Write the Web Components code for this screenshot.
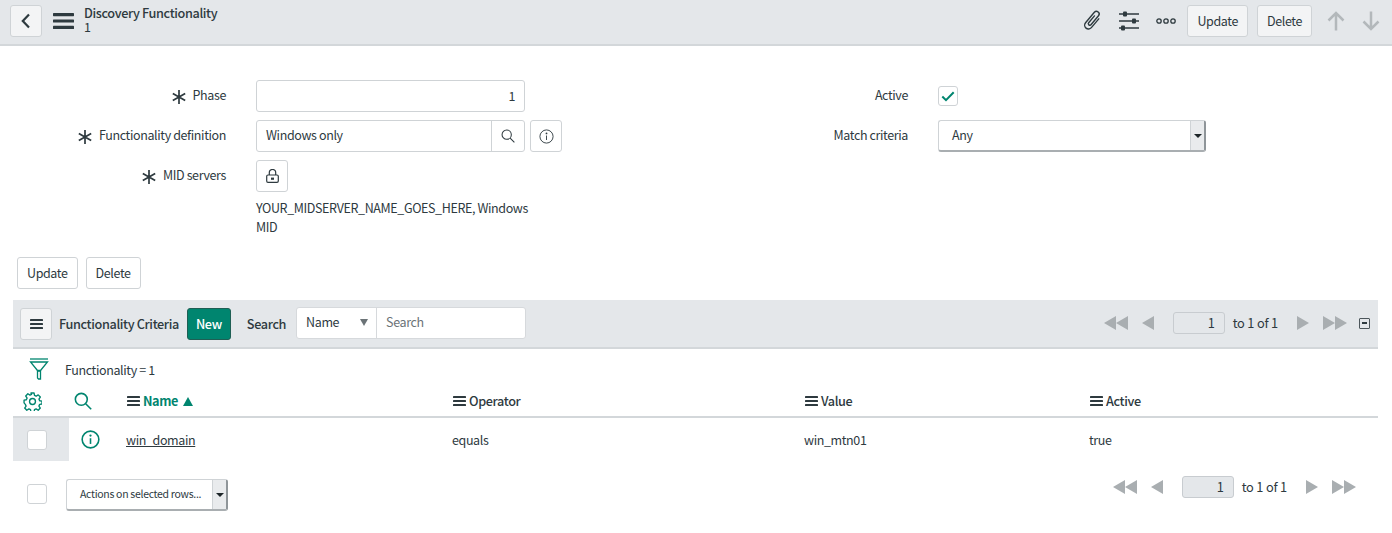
<!DOCTYPE html>
<html><head><meta charset="utf-8"><title>Discovery Functionality</title>
<style>
html,body{margin:0;padding:0;background:#fff}
body{font-family:"Noto Sans CJK JP","Noto Sans",sans-serif;font-size:12.500px;letter-spacing:-.38px;color:#2e3a3f;line-height:20px;width:1392px;height:533px;overflow:hidden}
</style></head><body>
<app-page></app-page>
<script>
const F='12.500px', FB='12.700px';
const ICON={
 back:'<svg width="12" height="16" viewBox="0 0 12 16"><path d="M9 1.5 2.800 8 9 14.500" fill="none" stroke="#2e3a3f" stroke-width="2.200"/></svg>',
 burger:(w,h,sw)=>`<svg width="${w}" height="${h}" viewBox="0 0 ${w} ${h}"><g fill="#2e3a3f"><rect y="0" width="${w}" height="${sw}" rx=".6"/><rect y="${(h-sw)/2}" width="${w}" height="${sw}" rx=".6"/><rect y="${h-sw}" width="${w}" height="${sw}" rx=".6"/></g></svg>`,
 clip:'<svg width="24" height="24" viewBox="0 0 24 24"><path transform="rotate(40 12 12)" d="M15.800 6V17.500a3.800 3.800 0 0 1-7.600 0V3.800a2.700 2.700 0 0 1 5.400 0V15.500a1.500 1.500 0 0 1-3 0V6.500" fill="none" stroke="#2e3a3f" stroke-width="1.400" stroke-linecap="round"/></svg>',
 sliders:'<svg width="20" height="20" viewBox="0 0 20 20"><g stroke="#2e3a3f" stroke-width="1.600"><path d="M0 3h20M0 10h20M0 17h20"/></g><g fill="#2e3a3f"><rect x="4" y="0.500" width="4" height="5" rx="1"/><rect x="13" y="7.500" width="4" height="5" rx="1"/><rect x="2" y="14.500" width="4" height="5" rx="1"/></g></svg>',
 dots:'<svg width="20" height="6" viewBox="0 0 20 6"><g fill="none" stroke="#2e3a3f" stroke-width="1.300"><circle cx="3" cy="3" r="2.200"/><circle cx="10" cy="3" r="2.200"/><circle cx="17" cy="3" r="2.200"/></g></svg>',
 up:'<svg width="18" height="20" viewBox="0 0 18 20"><path d="M9 19.500V2M1.500 9.500 9 2l7.500 7.500" fill="none" stroke="#b3b8bb" stroke-width="2.500"/></svg>',
 down:'<svg width="18" height="20" viewBox="0 0 18 20"><path d="M9 .5V18M1.500 10.500 9 18l7.500-7.500" fill="none" stroke="#b3b8bb" stroke-width="2.500"/></svg>',
 star:'<svg width="14" height="14" viewBox="0 0 14 14" style="position:relative;top:.5px"><path d="M7 0v14M.8 3.400 13.200 10.600M13.200 3.400.8 10.600" stroke="#2e3a3f" stroke-width="1.700" fill="none"/></svg>',
 search:(s,c,sw)=>`<svg width="${s}" height="${s}" viewBox="0 0 16 16"><circle cx="6.500" cy="6.500" r="5.300" fill="none" stroke="${c}" stroke-width="${sw}"/><path d="M10.400 10.400 15.300 15.300" stroke="${c}" stroke-width="${sw}"/></svg>`,
 info:(s,c,sw)=>`<svg width="${s}" height="${s}" viewBox="0 0 18 18"><circle cx="9" cy="9" r="7.900" fill="none" stroke="${c}" stroke-width="${sw}"/><circle cx="9" cy="5.300" r="1.100" fill="${c}"/><path d="M9 7.800v5.400" stroke="${c}" stroke-width="${sw}"/></svg>`,
 lock:'<svg width="13" height="14" viewBox="0 0 13 14"><rect x=".7" y="6" width="11.600" height="7.300" rx="1.300" fill="none" stroke="#2e3a3f" stroke-width="1.200"/><path d="M3.300 6V3.700a3.200 3.200 0 0 1 6.400 0V6" fill="none" stroke="#2e3a3f" stroke-width="1.200"/><rect x="5" y="8.600" width="3" height="2.200" fill="#2e3a3f"/></svg>',
 check:'<svg width="14" height="11" viewBox="0 0 14 11"><path d="M1.300 5.500 5 9.200 12.700 1.300" fill="none" stroke="#00856f" stroke-width="2"/></svg>',
 funnel:'<svg width="20" height="22" viewBox="0 0 20 22"><g fill="none" stroke="#00856f" stroke-width="1.300"><path d="M1 1h18"/><path d="M1.500 4h17L11.500 12.500h-3z"/><path d="M8.500 13h3v8h-2l-1-1z"/></g></svg>',
 gear:'<svg width="19" height="19" viewBox="0 0 18 18"><g fill="none" stroke="#00856f" stroke-width="1.300"><circle cx="9" cy="9" r="2.800"/><path d="M7.500 1h3l.4 2.300 1.500.7 2-1.300 2 2.100-1.300 1.900.7 1.600 2.200.4v2.600l-2.200.4-.7 1.600 1.300 1.900-2 2.100-2-1.300-1.500.7-.4 2.300h-3l-.4-2.300-1.500-.7-2 1.300-2-2.100 1.300-1.900-.7-1.600L1 10.300V7.700l2.200-.4.7-1.600-1.300-1.900 2-2.100 2 1.300 1.500-.7z" stroke-linejoin="round"/></g></svg>'
};
function def(name,css,html){
 customElements.define(name,class extends HTMLElement{
  constructor(){super();const r=this.attachShadow({mode:'open'});
   const g=a=>this.getAttribute(a);
   r.innerHTML='<style>'+css+'</style>'+(typeof html==='function'?html(g):html);}
 });
}
const BTN=`box-sizing:border-box;border:1px solid #cfd3d6;border-radius:3px;background:#f3f4f5;`;
def('sn-btn',`:host{display:inline-flex;align-items:center;justify-content:center;${BTN}height:32px;padding:0 9px 1px;color:#2e3a3f;font-size:${F};line-height:20px;white-space:nowrap}
:host([plain]){background:#fff}
:host([primary]){background:#00856f;border-color:#1f5f54;color:#fff;font-weight:500;font-size:${FB}}`,'<slot></slot>');

def('sn-header',`:host{display:flex;align-items:center;box-sizing:border-box;height:46px;background:#e4e7ea;border-bottom:2px solid #d3d7da;padding:0 12px 2px 10px}
.t{margin-left:10px;margin-top:-4px}
.t b{display:block;font-weight:500;font-size:${FB};line-height:15px}
.t span{display:block;font-size:${F};line-height:14px}
.burger{margin-left:11px;display:flex}
.sp{flex:1}
.icons{display:flex;align-items:center}
.i{display:flex}`,
`<sn-btn style="width:32px;padding:0">${ICON.back}</sn-btn>
<span class="burger">${ICON.burger(21,16,3.2)}</span>
<div class="t"><b>Discovery Functionality</b><span>1</span></div><div class="sp"></div>
<div class="icons"><span class="i">${ICON.clip}</span><span class="i" style="margin-left:15px">${ICON.sliders}</span><span class="i" style="margin-left:17px">${ICON.dots}</span>
<sn-btn style="margin-left:11px">Update</sn-btn><sn-btn style="margin-left:9px">Delete</sn-btn>
<span class="i" style="margin-left:15px">${ICON.up}</span><span class="i" style="margin-left:17px">${ICON.down}</span></div>`);

def('sn-label',`:host{display:flex;align-items:center;justify-content:flex-end;gap:7px;font-size:${F};height:32px;white-space:nowrap}
.s{display:flex}
.x{position:relative;top:-1px}`,g=>`${g('req')!==null?`<span class="s">${ICON.star}</span>`:''}<span class="x"><slot></slot></span>`);

const INPUT=`box-sizing:border-box;border:1px solid #cfd3d6;border-radius:3px;background:#fff;height:32px;`;
def('sn-input',`:host{display:flex;align-items:center;${INPUT}width:269px;padding:0 9px 1px;font-size:${F}}
:host([right]){justify-content:flex-end}`,'<slot></slot>');

def('sn-ref',`:host{display:flex;gap:5px}
.f{display:flex;${INPUT}width:269px}
.v{flex:1;padding:0 9px 2px;display:flex;align-items:center;font-size:${F}}
.b{width:32px;border-left:1px solid #cfd3d6;display:flex;align-items:center;justify-content:center}
.i{${INPUT}width:32px;display:flex;align-items:center;justify-content:center}`,
`<div class="f"><div class="v"><slot></slot></div><div class="b">${ICON.search(14,'#2e3a3f',1.200)}</div></div><div class="i">${ICON.info(15,'#2e3a3f',1.100)}</div>`);

def('sn-select',`:host{display:flex;box-sizing:border-box;height:32px;border:1px solid #cfd3d6;border-right:2px solid #8f9599;border-bottom:2px solid #a9aeb1;border-radius:3px;background:#fff;font-size:${F};white-space:nowrap}
.v{flex:1;display:flex;align-items:center}
.c{width:13px;background:#e9ebed;border-left:1px solid #cfd3d6;display:flex;align-items:center;justify-content:center}
.c i{width:0;height:0;border:4px solid transparent;border-top:4px solid #1d2528;border-bottom:0}`,
`<div class="v"><slot></slot></div><div class="c"><i></i></div>`);

def('sn-check',`:host{display:flex;align-items:center;justify-content:center;box-sizing:border-box;width:20px;height:20px;border:1px solid #cfd3d6;border-radius:3px;background:#fff}`,
g=>g('checked')!==null?ICON.check:'');

def('sn-form',`:host{display:block;padding-top:34px}
.lock{${INPUT}width:32px;display:flex;align-items:center;justify-content:center}
.acts{display:flex;gap:8px;padding:21px 0 0 17px}
.wrap{display:grid;grid-template-columns:226px 300px 382px 298px}
.c{display:flex;flex-direction:column;gap:8px}
.c2{padding-left:30px;box-sizing:border-box}`,
`<div class="wrap">
 <div class="c"><sn-label req>Phase</sn-label><sn-label req>Functionality definition</sn-label><sn-label req>MID servers</sn-label></div>
 <div class="c c2"><sn-input right>1</sn-input><sn-ref style="width:306px">Windows only</sn-ref><div class="lock">${ICON.lock}</div>
   <div style="margin-top:-2px;width:274px;line-height:19px">YOUR_MIDSERVER_NAME_GOES_HERE, Windows MID</div></div>
 <div class="c"><sn-label>Active</sn-label><sn-label>Match criteria</sn-label></div>
 <div class="c c2"><div style="height:32px;display:flex;align-items:center"><sn-check checked></sn-check></div><sn-select style="width:268px"><span style="padding:0 0 2px 13px">Any</span></sn-select></div>
</div>
<div class="acts"><sn-btn plain>Update</sn-btn><sn-btn plain>Delete</sn-btn></div>`);

const tri=(d,c='#a9aeb1')=>`<i style="display:block;width:0;height:0;border-style:solid;border-width:7px 0 7px 0;border-color:transparent;${d=='l'?`border-right:12px solid ${c}`:`border-left:12px solid ${c}`}"></i>`;
def('sn-pager',`:host{display:flex;align-items:center;font-size:12.800px;letter-spacing:-.2px;white-space:nowrap}
.p{display:flex}
.n{${BTN}width:52px;height:22px;background:#e4e7ea;border-color:#c8ccd0;text-align:right;padding-right:9px;line-height:20px;margin:0 8px 0 19px}
.z{margin-left:19px}`,
`<span class="p">${tri('l')}${tri('l')}</span><span class="p" style="margin-left:14px">${tri('l')}</span><div class="n">1</div><span>to 1 of 1</span>
<span class="p z">${tri('r')}</span><span class="p" style="margin-left:14px">${tri('r')}${tri('r')}</span><slot></slot>`);

def('sn-listbar',`:host{display:flex;align-items:center;box-sizing:border-box;height:49px;background:#e4e7ea;border-bottom:2px solid #d3d7da;padding:1px 8px 0 7px;font-size:${F}}
.title{font-weight:500;margin-left:7px;font-size:${FB};white-space:nowrap}
.sl{font-weight:500;margin-left:16px;font-size:${FB}}
.srch{display:flex;${INPUT}width:230px;margin:0 0 2px 10px;border-color:#d6d9dc}
.n{width:80px;border-right:1px solid #d6d9dc;display:flex;align-items:center;justify-content:space-between;box-sizing:border-box;padding:0 8px 2px 9px}
.n i{width:0;height:0;border:4.500px solid transparent;border-top:7px solid #6b7377;border-bottom:0}
.q{padding:0 0 2px 9px;color:#6b7377;display:flex;align-items:center}
.sp{flex:1}
.min{box-sizing:border-box;width:11px;height:11px;border:1px solid #4c565b;margin-left:12px;display:flex;align-items:center;justify-content:center;border-radius:1px}
.min b{display:block;width:5px;height:1.500px;background:#2e3a3f}`,
`<sn-btn style="width:32px;padding:0">${ICON.burger(13,10,2)}</sn-btn><span class="title">Functionality Criteria</span>
<sn-btn primary style="margin-left:8px;width:44px;padding:0 0 1px">New</sn-btn><span class="sl">Search</span>
<div class="srch"><div class="n"><span>Name</span><i></i></div><div class="q">Search</div></div><div class="sp"></div>
<sn-pager style="margin-bottom:2px"><div class="min"><b></b></div></sn-pager>`);

def('sn-table',`:host{display:block;font-size:${F}}
.filter{display:flex;align-items:center;height:40px;box-sizing:border-box;padding:0 0 0 16px}
.ftxt{margin-left:16px;position:relative;top:1px}
table{border-collapse:separate;border-spacing:0;width:1365px;table-layout:fixed}
th,td{padding:0;text-align:left;vertical-align:middle;font-weight:500}
th{height:29px;box-sizing:border-box;border-bottom:2px solid #d3d7da;white-space:nowrap;padding-bottom:3px;font-size:${FB}}
th>div{display:flex;align-items:center;gap:3px;padding-left:1px}
td{height:43px;font-weight:400}
.ch{background:#e4e7ea}
.ch sn-check{margin-left:14px}
.g{color:#00856f;font-weight:700}
.up{width:0;height:0;border:5px solid transparent;border-bottom:9px solid #00856f;border-top:0;margin-left:2px}
a{color:#2e3a3f;text-decoration:underline}
.ic{display:flex}
.foot{display:flex;align-items:flex-start;padding:0 22px 0 14px;margin-top:15px}
.sp{flex:1}`,
`<div class="filter"><span class="ic">${ICON.funnel}</span><span class="ftxt">Functionality = 1</span></div>
<table><colgroup><col style="width:56px"><col style="width:57px"><col style="width:326px"><col style="width:352px"><col style="width:285px"><col></colgroup>
<tr><th><div style="padding-left:10px">${ICON.gear}</div></th><th><div style="padding-left:5px">${ICON.search(18,'#00856f',1.400)}</div></th>
<th><div>${ICON.burger(13,10,2)}<span class="g">Name</span><span class="up"></span></div></th>
<th><div>${ICON.burger(13,10,2)}<span>Operator</span></div></th><th><div>${ICON.burger(13,10,2)}<span>Value</span></div></th><th><div>${ICON.burger(13,10,2)}<span>Active</span></div></th></tr>
<tr><td class="ch"><sn-check></sn-check></td><td><div class="ic" style="padding-left:12px">${ICON.info(19,'#00856f',1.500)}</div></td><td><a>win_domain</a></td><td>equals</td><td>win_mtn01</td><td>true</td></tr></table>
<div class="foot"><sn-check style="margin-top:8px"></sn-check>
<sn-select style="width:162px;margin-left:19px;margin-top:3px"><span style="padding:0 0 2px 13px;font-size:10.500px;letter-spacing:-.3px">Actions on selected rows...</span></sn-select><div class="sp"></div>
<sn-pager></sn-pager></div>`);

def('app-page',`:host{display:block}
.list{padding:11px 14px 0 13px}`,
`<sn-header></sn-header><sn-form></sn-form><div class="list"><sn-listbar></sn-listbar><sn-table></sn-table></div>`);
</script>
</body></html>
